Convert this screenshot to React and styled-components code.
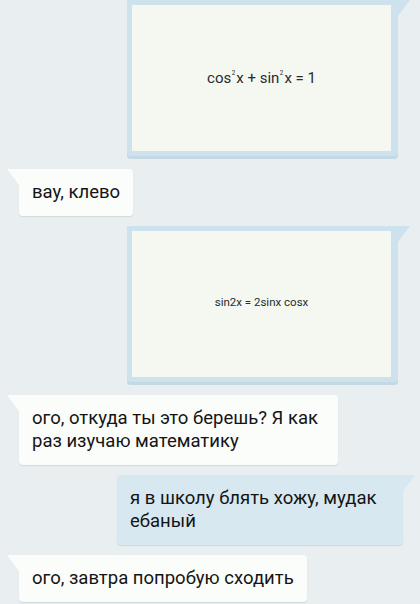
import React from 'react'
import styled, { createGlobalStyle } from 'styled-components'

const GlobalStyle = createGlobalStyle`
  html, body {
    margin: 0;
    padding: 0;
    background: #e9eff0;
  }
  body {
    font-family: Roboto, "Liberation Sans", sans-serif;
  }
`

const Chat = styled.div`
  width: 420px;
  height: 604px;
  overflow: hidden;
  display: flex;
  flex-direction: column;
  gap: 10px;
  padding: 0 17px 0 19px;
  box-sizing: border-box;
  background: #e9eff0;
`

const Bubble = styled.div`
  position: relative;
  align-self: ${p => (p.$out ? 'flex-end' : 'flex-start')};
  width: ${p => (p.$width ? p.$width + 'px' : 'auto')};
  box-sizing: border-box;
  padding: 12px 13px;
  background: ${p => (p.$out ? '#d7e8f1' : '#fbfdfb')};
  border-radius: ${p => (p.$out ? '4px 0 4px 4px' : '0 4px 4px 4px')};
  box-shadow: 0 1px 1px rgba(120, 150, 150, 0.25);
  color: #141414;
  font-size: 18.5px;
  line-height: 23px;
  white-space: nowrap;

  &::before {
    content: '';
    position: absolute;
    top: 0;
    width: 12px;
    height: 16px;
    background: inherit;
    ${p =>
      p.$out
        ? 'right: -12px; clip-path: polygon(0 0, 100% 0, 0 100%);'
        : 'left: -12px; clip-path: polygon(0 0, 100% 0, 100% 100%);'}
  }
`

const Picture = styled.div`
  position: relative;
  align-self: flex-end;
  margin-right: 5px;
  width: 271px;
  box-sizing: border-box;
  padding: 5px 7px 8px 5px;
  background: #cde2ec;
  border-radius: 0 0 4px 4px;
  box-shadow: inset 0 -3px 0 #c4d9e4;

  &::before {
    content: '';
    position: absolute;
    top: 0;
    right: -12px;
    width: 12px;
    height: 16px;
    background: #cde2ec;
    clip-path: polygon(0 0, 100% 0, 0 100%);
  }
`

const Canvas = styled.div`
  height: ${p => p.$height}px;
  background: #f4f8f1;
  display: flex;
  align-items: center;
  justify-content: center;
  color: #2a2a2a;
  font-size: ${p => p.$size}px;
  padding-bottom: ${p => p.$lift || 0}px;
  box-sizing: border-box;
  white-space: pre;
`

const Sup = styled.span`
  display: inline-block;
  font-size: 0.42em;
  line-height: 1;
  transform: translateY(-0.75em);
  margin: 0 1px 0 0.5px;
`

export default function App() {
  return (
    <>
      <GlobalStyle />
      <Chat>
        <Picture>
          <Canvas $height={146} $size={15} $lift={0}>
            cos<Sup>2</Sup>x + sin<Sup>2</Sup>x = 1
          </Canvas>
        </Picture>
        <Bubble>вау, клево</Bubble>
        <Picture>
          <Canvas $height={146} $size={11.5} $lift={4}>
            sin2x = 2sinx cosx
          </Canvas>
        </Picture>
        <Bubble $width={319}>
          ого, откуда ты это берешь? Я как
          <br />
          раз изучаю математику
        </Bubble>
        <Bubble $out $width={286}>
          я в школу блять хожу, мудак
          <br />
          ебаный
        </Bubble>
        <Bubble>ого, завтра попробую сходить</Bubble>
      </Chat>
    </>
  )
}
